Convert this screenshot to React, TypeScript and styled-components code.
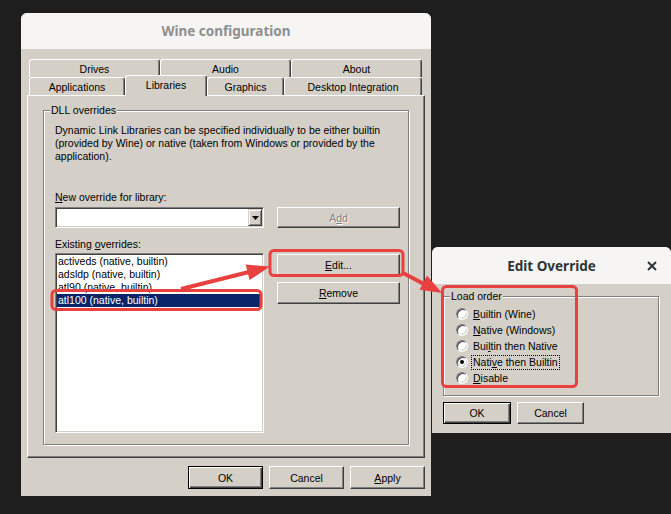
import * as React from "react";
import styled, { createGlobalStyle, css } from "styled-components";

const FACE = "#d4d0c8";
const UI_FONT = `"Liberation Sans", Arial, sans-serif`;

const GlobalStyle = createGlobalStyle`
  html, body {
    margin: 0;
    padding: 0;
    background: #1e1e1e;
  }
  body {
    width: 671px;
    height: 514px;
    overflow: hidden;
    font-family: ${UI_FONT};
  }
`;

const raised = css`
  border: 1px solid;
  border-color: #fff #404040 #404040 #fff;
  box-shadow: inset -1px -1px 0 #808080;
`;

const sunken = css`
  border: 1px solid;
  border-color: #808080 #fff #fff #808080;
  box-shadow: inset 1px 1px 0 #404040, inset -1px -1px 0 ${FACE};
`;

const Desktop = styled.div`
  position: relative;
  width: 671px;
  height: 514px;
  background: #1e1e1e;
  overflow: hidden;
`;

// windows sit on the desktop canvas at their own place
const Window = styled.div<{ $left: number; $top: number; $width: number; $height: number }>`
  position: absolute;
  left: ${(p) => p.$left}px;
  top: ${(p) => p.$top}px;
  width: ${(p) => p.$width}px;
  height: ${(p) => p.$height}px;
  display: flex;
  flex-direction: column;
  background: ${FACE};
  border-radius: 6px 6px 0 0;
  overflow: hidden;
  font-family: ${UI_FONT};
  font-size: 10.5px;
  color: #000;
`;

const TitleBar = styled.div<{ $active?: boolean; $h: number }>`
  flex: none;
  height: ${(p) => p.$h}px;
  display: grid;
  grid-template-columns: 1fr auto 1fr;
  align-items: center;
  padding: 0 14px;
  background: #f6f5f4;
  font-family: "Noto Sans", "Open Sans", sans-serif;
  font-weight: 700;
  font-size: 13.5px;
  color: ${(p) => (p.$active ? "#2e3436" : "#8e8e8e")};
`;

const TitleText = styled.span`
  grid-column: 2;
`;

const CloseButton = styled.span`
  grid-column: 3;
  justify-self: end;
  display: flex;
  align-items: center;
`;

const MainBody = styled.div`
  flex: 1;
  display: flex;
  flex-direction: column;
  padding: 10px 6px 7px;
`;

const TabStrip = styled.div`
  display: flex;
  flex-direction: column;
  padding-left: 2px;
`;

const TabRow = styled.div`
  display: flex;
  align-items: flex-end;
  height: 18px;
`;

const Tab = styled.div<{ $w: number; $selected?: boolean }>`
  box-sizing: border-box;
  width: ${(p) => p.$w}px;
  height: 18px;
  display: flex;
  align-items: center;
  justify-content: center;
  background: ${FACE};
  border: 1px solid;
  border-bottom: none;
  border-color: #fff #404040 transparent #fff;
  border-radius: 3px 3px 0 0;
  box-shadow: inset -1px 0 0 #808080;
  padding-top: 1px;
  ${(p) =>
    p.$selected &&
    css`
      height: 21px;
      margin-bottom: -1px;
      padding-top: 0;
      padding-bottom: 2px;
      position: relative;
      z-index: 1;
    `}
`;

const TabPanel = styled.div`
  flex: 1;
  display: flex;
  flex-direction: column;
  border: 1px solid;
  border-color: #fff #404040 #404040 #fff;
  box-shadow: inset -1px -1px 0 #808080;
  padding: 8px 15px 12px 15px;
`;

const GroupBox = styled.fieldset<{ $grow?: boolean; $bottom: number }>`
  margin: 0;
  min-width: 0;
  padding: 0 0 ${(p) => p.$bottom}px 6px;
  border: 1px solid #808080;
  box-shadow: inset 1px 1px 0 #fff, 1px 1px 0 #fff;
  ${(p) => p.$grow && "flex: 1;"}
`;

const GroupLegend = styled.legend`
  padding: 0 1px;
  line-height: 13px;
  background: ${FACE};
`;

const GroupContent = styled.div`
  display: flex;
  flex-direction: column;
  padding: 7px 0 0 5px;
`;

const Description = styled.p`
  margin: 0;
  line-height: 13px;
`;

const FieldLabel = styled.div<{ $top: number }>`
  margin-top: ${(p) => p.$top}px;
  line-height: 13px;
`;

const ControlGrid = styled.div<{ $top: number }>`
  display: grid;
  grid-template-columns: 209px 123px;
  column-gap: 13px;
  align-items: start;
  margin-top: ${(p) => p.$top}px;
`;

const Button = styled.button<{ $w: number; $h: number; $default?: boolean }>`
  box-sizing: border-box;
  width: ${(p) => p.$w}px;
  height: ${(p) => p.$h}px;
  padding: 0;
  margin: 0;
  background: ${FACE};
  font-family: ${UI_FONT};
  font-size: 10.5px;
  color: #000;
  ${raised}
  ${(p) =>
    p.$default &&
    css`
      border: 1px solid #000;
      box-shadow: inset 1px 1px 0 #fff, inset -1px -1px 0 #404040, inset -2px -2px 0 #808080;
    `}
  &:disabled {
    color: #808080;
    text-shadow: 1px 1px 0 #fff;
  }
`;

const Combo = styled.div`
  box-sizing: border-box;
  height: 21px;
  display: flex;
  background: #fff;
  ${sunken}
  padding: 1px;
`;

const ComboField = styled.div`
  flex: 1;
`;

const DropButton = styled.div`
  box-sizing: border-box;
  width: 14px;
  display: flex;
  align-items: center;
  justify-content: center;
  background: ${FACE};
  border: 1px solid;
  border-color: ${FACE} #404040 #404040 ${FACE};
  box-shadow: inset 1px 1px 0 #fff, inset -1px -1px 0 #808080;
`;

const ListBox = styled.div`
  box-sizing: border-box;
  height: 180px;
  display: flex;
  flex-direction: column;
  background: #fff;
  ${sunken}
  padding: 1px;
`;

const ListItem = styled.div<{ $selected?: boolean }>`
  height: 13px;
  line-height: 13px;
  padding-left: 1px;
  white-space: nowrap;
  background: ${(p) => (p.$selected ? "#0a246a" : "transparent")};
  color: ${(p) => (p.$selected ? "#fff" : "#000")};
`;

const ButtonColumn = styled.div`
  display: flex;
  flex-direction: column;
  gap: 6px;
  padding-top: 1px;
`;

const ButtonRow = styled.div<{ $top: number; $justify: string; $gap: number }>`
  display: flex;
  justify-content: ${(p) => p.$justify};
  gap: ${(p) => p.$gap}px;
  margin-top: ${(p) => p.$top}px;
`;

const DialogBody = styled.div`
  flex: 1;
  display: flex;
  flex-direction: column;
  padding: 6px 12px 8px 11px;
`;

const RadioList = styled.div`
  display: flex;
  flex-direction: column;
  padding: 3px 0 0 6px;
`;

const RadioRow = styled.label`
  height: 16px;
  display: flex;
  align-items: center;
  gap: 4px;
`;

const RadioCircle = styled.span<{ $checked?: boolean }>`
  box-sizing: border-box;
  width: 12px;
  height: 12px;
  border-radius: 50%;
  display: flex;
  align-items: center;
  justify-content: center;
  background: #fff;
  border: 1px solid;
  border-color: #808080 #fff #fff #808080;
  box-shadow: inset 1px 1px 0 #404040, inset -1px -1px 0 ${FACE};
  &::after {
    content: "";
    width: 4px;
    height: 4px;
    border-radius: 50%;
    background: ${(p) => (p.$checked ? "#000" : "transparent")};
  }
`;

const RadioLabel = styled.span<{ $focused?: boolean }>`
  line-height: 13px;
  padding: 0 1px;
  outline: ${(p) => (p.$focused ? "1px dotted #000" : "none")};
`;

const Overlay = styled.svg`
  position: absolute;
  left: 0;
  top: 0;
  pointer-events: none;
`;

const TOP_TABS = [
  { label: "Drives", w: 131 },
  { label: "Audio", w: 131 },
  { label: "About", w: 131 },
];

const FRONT_TABS = [
  { label: "Applications", w: 96 },
  { label: "Libraries", w: 82, selected: true },
  { label: "Graphics", w: 77 },
  { label: "Desktop Integration", w: 138 },
];

const OVERRIDES = [
  "activeds (native, builtin)",
  "adsldp (native, builtin)",
  "atl90 (native, builtin)",
  "atl100 (native, builtin)",
];

const LOAD_ORDERS: { pre: string; key: string; post: string; checked?: boolean }[] = [
  { pre: "", key: "B", post: "uiltin (Wine)" },
  { pre: "", key: "N", post: "ative (Windows)" },
  { pre: "Bui", key: "l", post: "tin then Native" },
  { pre: "Nati", key: "v", post: "e then Builtin", checked: true },
  { pre: "", key: "D", post: "isable" },
];

const RED = "#e9413f";

const Annotations = () => (
  <Overlay width={671} height={514} viewBox="0 0 671 514">
    <g fill="none" stroke={RED} strokeWidth={3}>
      <rect x={52} y={290.5} width={209} height={19} rx={4} />
      <rect x={270} y={250.5} width={133} height={25} rx={4} />
      <rect x={442.5} y={286.5} width={134} height={100} rx={4} />
    </g>
    <g stroke={RED} strokeWidth={4}>
      <line x1={181} y1={289} x2={249} y2={272} />
      <line x1={403} y1={273} x2={424} y2={284} />
    </g>
    <g fill={RED}>
      <polygon points="270,266.5 249.6,280.1 245.7,264.6" />
      <polygon points="442,293 419.6,289.8 427,275.6" />
    </g>
  </Overlay>
);

const App = () => {
  return (
    <>
      <GlobalStyle />
      <Desktop>
        <Window $left={21} $top={13} $width={410} $height={483}>
          <TitleBar $h={36}>
            <TitleText>Wine configuration</TitleText>
          </TitleBar>
          <MainBody>
            <TabStrip>
              <TabRow>
                {TOP_TABS.map((t) => (
                  <Tab key={t.label} $w={t.w}>
                    {t.label}
                  </Tab>
                ))}
              </TabRow>
              <TabRow>
                {FRONT_TABS.map((t) => (
                  <Tab key={t.label} $w={t.w} $selected={t.selected}>
                    {t.label}
                  </Tab>
                ))}
              </TabRow>
            </TabStrip>
            <TabPanel>
              <GroupBox $grow $bottom={10}>
                <GroupLegend>DLL overrides</GroupLegend>
                <GroupContent>
                  <Description>
                    Dynamic Link Libraries can be specified individually to be either builtin
                    <br />
                    (provided by Wine) or native (taken from Windows or provided by the
                    <br />
                    application).
                  </Description>
                  <FieldLabel $top={28}>
                    <u>N</u>ew override for library:
                  </FieldLabel>
                  <ControlGrid $top={3}>
                    <Combo>
                      <ComboField />
                      <DropButton>
                        <svg width="7" height="4" viewBox="0 0 7 4">
                          <polygon points="0,0 7,0 3.5,4" fill="#000" />
                        </svg>
                      </DropButton>
                    </Combo>
                    <Button $w={123} $h={21} disabled>
                      A<u>d</u>d
                    </Button>
                  </ControlGrid>
                  <FieldLabel $top={10}>
                    Existing <u>o</u>verrides:
                  </FieldLabel>
                  <ControlGrid $top={2}>
                    <ListBox>
                      {OVERRIDES.map((name, i) => (
                        <ListItem key={name} $selected={i === OVERRIDES.length - 1}>
                          {name}
                        </ListItem>
                      ))}
                    </ListBox>
                    <ButtonColumn>
                      <Button $w={123} $h={22}>
                        <u>E</u>dit...
                      </Button>
                      <Button $w={123} $h={22}>
                        <u>R</u>emove
                      </Button>
                    </ButtonColumn>
                  </ControlGrid>
                </GroupContent>
              </GroupBox>
            </TabPanel>
            <ButtonRow $top={8} $justify="flex-end" $gap={6}>
              <Button $w={75} $h={23} $default>
                OK
              </Button>
              <Button $w={75} $h={23}>
                Cancel
              </Button>
              <Button $w={75} $h={23}>
                <u>A</u>pply
              </Button>
            </ButtonRow>
          </MainBody>
        </Window>

        <Window $left={432} $top={247} $width={239} $height={186}>
          <TitleBar $h={37} $active>
            <TitleText>Edit Override</TitleText>
            <CloseButton>
              <svg width="10" height="10" viewBox="0 0 10 10">
                <path d="M1 1 L9 9 M9 1 L1 9" stroke="#2e3436" strokeWidth="2" />
              </svg>
            </CloseButton>
          </TitleBar>
          <DialogBody>
            <GroupBox $bottom={9}>
              <GroupLegend>Load order</GroupLegend>
              <RadioList>
                {LOAD_ORDERS.map((o) => (
                  <RadioRow key={o.post}>
                    <RadioCircle $checked={o.checked} />
                    <RadioLabel $focused={o.checked}>
                      {o.pre}
                      <u>{o.key}</u>
                      {o.post}
                    </RadioLabel>
                  </RadioRow>
                ))}
              </RadioList>
            </GroupBox>
            <ButtonRow $top={6} $justify="flex-start" $gap={6}>
              <Button $w={68} $h={22} $default>
                OK
              </Button>
              <Button $w={67} $h={22}>
                Cancel
              </Button>
            </ButtonRow>
          </DialogBody>
        </Window>

        <Annotations />
      </Desktop>
    </>
  );
};

export default App;
